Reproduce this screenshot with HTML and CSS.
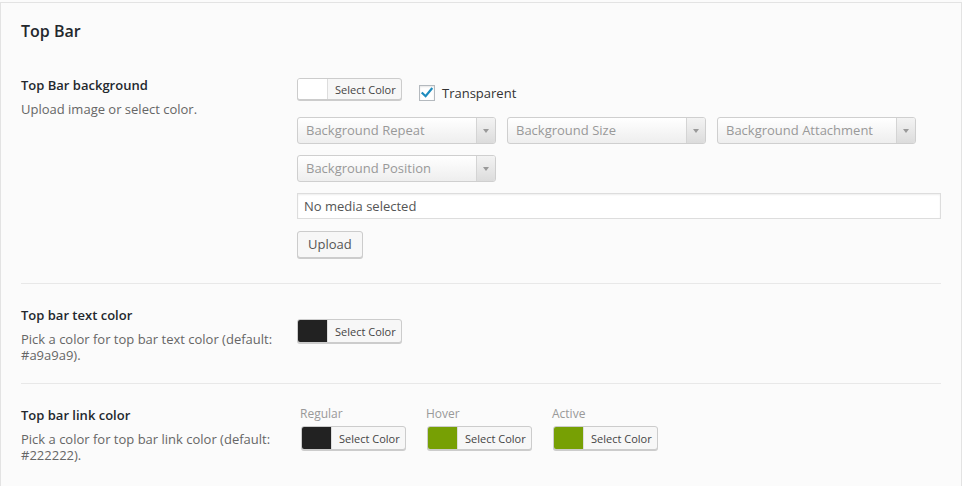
FILE: index.html
```html
<!DOCTYPE html>
<html>
<head>
<meta charset="utf-8">
<link rel="stylesheet" href="styles.css">
</head>
<body>
<div class="panel">
  <h2 class="title">Top Bar</h2>

  <div class="row row-first">
    <div class="label-col">
      <div class="label">Top Bar background</div>
      <div class="desc">Upload image or select color.</div>
    </div>
    <div class="ctrl-col">
      <div class="line line-color">
        <div class="picker picker-sm"><span class="swatch swatch-white"></span><span class="pick-btn">Select Color</span></div>
        <label class="check"><span class="box"><svg width="14" height="14" viewBox="0 0 14 14"><path d="M2.5 7.2 L5.6 10.2 L11.6 2.8" fill="none" stroke="#1e8cbe" stroke-width="2.2" stroke-linecap="square"/></svg></span>Transparent</label>
      </div>
      <div class="line line-selects">
        <div class="select"><span class="sel-text">Background Repeat</span><span class="sel-arrow"></span></div>
        <div class="select"><span class="sel-text">Background Size</span><span class="sel-arrow"></span></div>
        <div class="select"><span class="sel-text">Background Attachment</span><span class="sel-arrow"></span></div>
      </div>
      <div class="line line-selects2">
        <div class="select"><span class="sel-text">Background Position</span><span class="sel-arrow"></span></div>
      </div>
      <div class="media">No media selected</div>
      <div class="line"><span class="button">Upload</span></div>
    </div>
  </div>

  <div class="row">
    <div class="label-col">
      <div class="label">Top bar text color</div>
      <div class="desc">Pick a color for top bar text color (default: #a9a9a9).</div>
    </div>
    <div class="ctrl-col ctrl-col-2">
      <div class="picker"><span class="swatch swatch-dark"></span><span class="pick-btn">Select Color</span></div>
    </div>
  </div>

  <div class="row row-last">
    <div class="label-col">
      <div class="label">Top bar link color</div>
      <div class="desc">Pick a color for top bar link color (default: #222222).</div>
    </div>
    <div class="ctrl-col ctrl-col-3">
      <div class="group">
        <div class="small">Regular</div>
        <div class="picker"><span class="swatch swatch-dark"></span><span class="pick-btn">Select Color</span></div>
      </div>
      <div class="group">
        <div class="small">Hover</div>
        <div class="picker"><span class="swatch swatch-green"></span><span class="pick-btn">Select Color</span></div>
      </div>
      <div class="group">
        <div class="small">Active</div>
        <div class="picker"><span class="swatch swatch-green"></span><span class="pick-btn">Select Color</span></div>
      </div>
    </div>
  </div>
</div>
</body>
</html>
```

FILE: styles.css
```css
html, body {
  margin: 0;
  padding: 0;
  background: #fbfbfb;
}
body {
  font-family: "Open Sans", "Noto Sans", sans-serif;
  font-size: 13px;
  color: #444;
  width: 962px;
  height: 486px;
  overflow: hidden;
}
.panel {
  box-sizing: border-box;
  margin-top: 2px;
  height: 484px;
  border-top: 1px solid #e3e3e3;
  border-left: 1px solid #e3e3e3;
  border-right: 1px solid #e3e3e3;
  background: #fbfbfb;
  padding: 0 20px;
}
.title {
  margin: 0;
  padding-top: 17px;
  height: 34px;
  font-size: 16px;
  line-height: 22px;
  font-weight: 600;
  color: #23282d;
}
.row {
  display: grid;
  grid-template-columns: 276px 1fr;
  padding: 22px 0 20px;
  border-bottom: 1px solid #e8e8e8;
}
.row-first { padding-bottom: 25px; }
.row-last { border-bottom: none; }
.label {
  font-weight: 600;
  color: #23282d;
  line-height: 18px;
  font-size: 13px;
}
.desc {
  margin-top: 7px;
  line-height: 16px;
  color: #666;
  width: 262px;
}
.ctrl-col { display: flex; flex-direction: column; align-items: flex-start; }
.line { display: flex; align-items: center; }
.line-color { margin-top: 2px; height: 22px; align-items: flex-start; }
.line-selects { margin-top: 17px; gap: 11px; }
.line-selects2 { margin-top: 11px; }
.ctrl-col-2 { padding-top: 13px; }
.ctrl-col-3 { flex-direction: row; gap: 21px; padding-left: 4px; }

.picker {
  display: inline-flex;
  box-sizing: border-box;
  width: 105px;
  height: 24px;
  border: 1px solid #ccc;
  border-radius: 3px;
  box-shadow: 0 1px 0 #ccc;
  overflow: hidden;
  background: #f7f7f7;
}
.picker-sm { height: 22px; }
.swatch { width: 29px; flex: none; border-right: 1px solid #ddd; }
.swatch-white { background: #fff; }
.swatch-dark { background: #222222; }
.swatch-green { background: #77a004; }
.pick-btn {
  font-size: 11px;
  color: #444;
  padding-left: 7px;
  display: flex;
  align-items: center;
  flex: 1;
  white-space: nowrap;
}
.check {
  display: inline-flex;
  align-items: center;
  margin-left: 17px;
  margin-top: 7px;
  color: #333;
  font-size: 13px;
  line-height: 16px;
}
.box {
  box-sizing: border-box;
  width: 16px;
  height: 16px;
  border: 1px solid #b4b9be;
  background: #fff;
  box-shadow: inset 0 1px 2px rgba(0,0,0,0.1);
  display: inline-flex;
  align-items: center;
  justify-content: center;
  margin-right: 7px;
}
.select {
  box-sizing: border-box;
  width: 199px;
  height: 27px;
  border: 1px solid #cfcfcf;
  border-radius: 3px;
  background: linear-gradient(#ffffff, #eeeeee);
  display: flex;
  overflow: hidden;
}
.sel-text {
  flex: 1;
  color: #999;
  padding-left: 8px;
  line-height: 25px;
  white-space: nowrap;
}
.sel-arrow {
  width: 18px;
  border-left: 1px solid #d4d4d4;
  background: linear-gradient(#f3f3f3, #dcdcdc);
  position: relative;
}
.sel-arrow::after {
  content: "";
  position: absolute;
  left: 6px;
  top: 11px;
  border-left: 3px solid transparent;
  border-right: 3px solid transparent;
  border-top: 4px solid #999;
}
.media {
  box-sizing: border-box;
  align-self: stretch;
  margin-top: 11px;
  height: 26px;
  border: 1px solid #ddd;
  background: #fff;
  box-shadow: inset 0 1px 2px rgba(0,0,0,0.07);
  color: #555;
  padding-left: 6px;
  line-height: 24px;
}
.button {
  margin-top: 12px;
  box-sizing: border-box;
  height: 27px;
  padding: 0 10px;
  border: 1px solid #ccc;
  border-radius: 3px;
  background: #f7f7f7;
  box-shadow: 0 1px 0 #ccc;
  color: #555;
  line-height: 25px;
}
.group { display: flex; flex-direction: column; }
.small {
  color: #999;
  font-size: 12px;
  line-height: 16px;
  margin-left: -1px;
  margin-bottom: 4px;
}
```
